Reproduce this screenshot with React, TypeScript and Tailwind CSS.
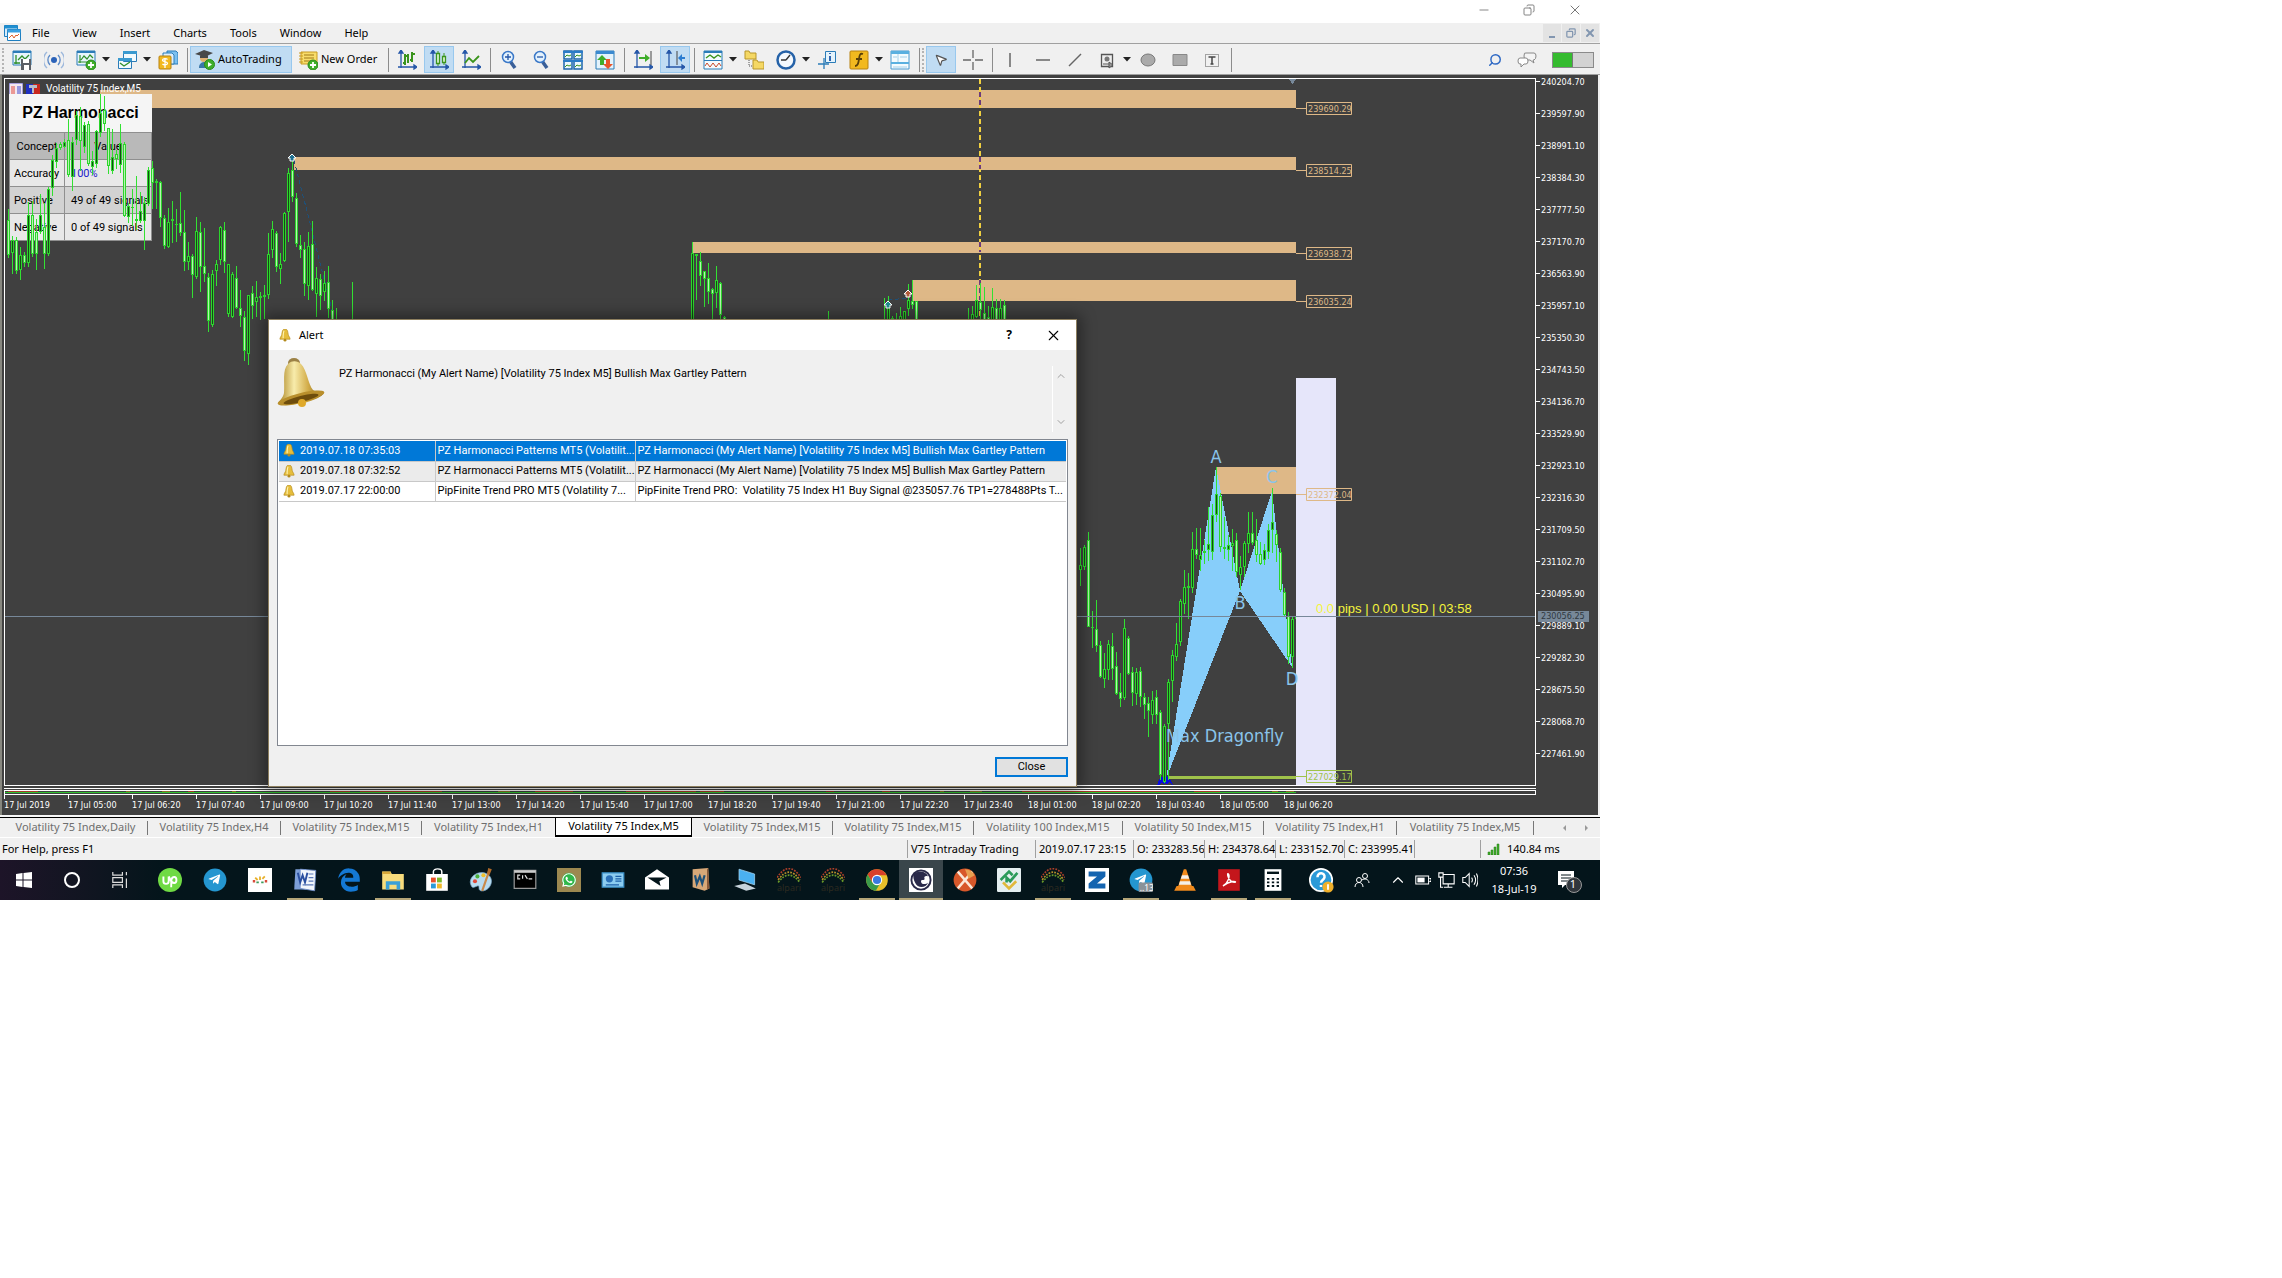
import type { ReactNode } from 'react';
import {
  ChevronUp,
  ChevronDown,
  Minus,
  X,
  Copy,
  Search,
  MousePointer2,
} from 'lucide-react';
import { FaTelegramPlane, FaWhatsapp, FaEdgeLegacy } from 'react-icons/fa';

const MENU = ['File', 'View', 'Insert', 'Charts', 'Tools', 'Window', 'Help'];

const PRICES = [
  '240204.70', '239597.90', '238991.10', '238384.30', '237777.50', '237170.70',
  '236563.90', '235957.10', '235350.30', '234743.50', '234136.70', '233529.90',
  '232923.10', '232316.30', '231709.50', '231102.70', '230495.90', '229889.10',
  '229282.30', '228675.50', '228068.70', '227461.90',
];

const TIMES = [
  '17 Jul 2019', '17 Jul 05:00', '17 Jul 06:20', '17 Jul 07:40', '17 Jul 09:00',
  '17 Jul 10:20', '17 Jul 11:40', '17 Jul 13:00', '17 Jul 14:20', '17 Jul 15:40',
  '17 Jul 17:00', '17 Jul 18:20', '17 Jul 19:40', '17 Jul 21:00', '17 Jul 22:20',
  '17 Jul 23:40', '18 Jul 01:00', '18 Jul 02:20', '18 Jul 03:40', '18 Jul 05:00',
  '18 Jul 06:20',
];

// x, high, body top, body bottom, low, bullish
type Candle = [number, number, number, number, number, number];

const CANDLES: Candle[] = [
  [8, 209, 220, 255, 258, 0], [12, 236, 240, 253, 274, 1], [16, 237, 240, 271, 274, 0],
  [20, 247, 255, 270, 280, 1], [24, 252, 255, 263, 267, 0], [28, 202, 215, 263, 267, 1],
  [32, 201, 215, 254, 257, 0], [36, 219, 232, 254, 270, 0], [40, 194, 215, 232, 234, 1],
  [44, 203, 227, 254, 269, 0], [48, 187, 189, 254, 256, 1], [52, 155, 160, 188, 196, 1],
  [56, 143, 148, 162, 168, 1], [60, 142, 144, 148, 150, 0], [64, 139, 142, 147, 148, 1],
  [68, 119, 140, 175, 177, 0], [72, 137, 142, 177, 191, 1], [76, 111, 115, 140, 145, 1],
  [80, 107, 116, 141, 171, 0], [84, 122, 125, 147, 153, 1], [88, 121, 124, 164, 166, 0],
  [92, 151, 161, 167, 175, 1], [96, 130, 131, 164, 168, 1], [100, 94, 113, 133, 137, 1],
  [104, 96, 110, 124, 131, 0], [108, 128, 128, 166, 174, 0], [112, 129, 157, 171, 174, 1],
  [116, 150, 154, 159, 169, 0], [120, 124, 143, 165, 173, 1], [124, 142, 144, 216, 217, 0],
  [128, 203, 206, 217, 223, 1], [132, 189, 207, 208, 226, 0], [136, 176, 219, 221, 230, 0],
  [140, 192, 211, 221, 223, 1], [144, 197, 203, 221, 250, 1], [148, 167, 170, 204, 206, 1],
  [152, 161, 168, 183, 209, 0], [156, 179, 181, 183, 209, 0], [160, 181, 182, 218, 227, 0],
  [164, 215, 218, 246, 249, 0], [168, 208, 222, 247, 248, 1], [172, 201, 219, 221, 243, 1],
  [176, 209, 224, 225, 242, 0], [180, 192, 223, 233, 236, 0], [184, 210, 232, 262, 271, 0],
  [188, 242, 256, 262, 270, 1], [192, 254, 256, 275, 298, 0], [196, 217, 231, 277, 279, 1],
  [200, 222, 232, 267, 292, 0], [204, 228, 266, 274, 282, 0], [208, 273, 277, 321, 332, 0],
  [212, 270, 274, 325, 327, 1], [216, 260, 264, 271, 286, 1], [220, 226, 227, 260, 265, 1],
  [224, 222, 230, 262, 273, 0], [228, 264, 264, 314, 317, 1], [232, 272, 274, 317, 318, 1],
  [236, 266, 278, 308, 309, 0], [240, 290, 308, 316, 327, 0], [244, 311, 317, 351, 361, 0],
  [248, 295, 295, 354, 365, 1], [252, 286, 293, 306, 319, 0], [256, 281, 297, 302, 317, 1],
  [260, 292, 296, 298, 320, 1], [264, 285, 295, 297, 319, 0], [268, 233, 254, 295, 299, 1],
  [272, 221, 229, 250, 258, 1], [276, 231, 233, 267, 272, 0], [280, 253, 264, 269, 284, 1],
  [284, 212, 213, 261, 262, 1], [288, 168, 173, 212, 242, 1], [292, 158, 170, 197, 202, 0],
  [296, 193, 198, 244, 247, 0], [300, 235, 245, 250, 258, 0], [304, 242, 249, 284, 296, 0],
  [308, 232, 246, 286, 300, 1], [312, 221, 244, 290, 291, 0], [316, 267, 278, 294, 317, 1],
  [320, 274, 279, 296, 310, 0], [324, 271, 283, 292, 301, 1], [328, 266, 282, 309, 318, 0],
  [332, 300, 310, 330, 335, 0], [336, 308, 325, 330, 335, 0], [352, 282, 330, 333, 335, 1],
  [692, 242, 253, 335, 336, 1], [696, 254, 254, 256, 300, 0], [700, 252, 261, 276, 286, 0],
  [704, 271, 271, 279, 307, 0], [708, 263, 278, 292, 304, 0], [712, 288, 289, 294, 330, 0],
  [716, 266, 280, 293, 308, 1], [720, 282, 283, 315, 319, 0], [724, 316, 317, 330, 335, 0],
  [828, 311, 330, 333, 335, 1], [884, 298, 328, 333, 335, 1], [888, 296, 302, 333, 335, 1],
  [892, 316, 318, 333, 335, 0], [896, 313, 322, 333, 335, 1], [900, 307, 316, 333, 335, 1],
  [904, 311, 311, 333, 335, 1], [908, 284, 300, 309, 316, 1], [912, 280, 301, 305, 309, 0],
  [916, 301, 301, 333, 335, 0], [968, 308, 325, 333, 335, 1], [972, 306, 314, 333, 335, 1],
  [976, 285, 300, 317, 318, 1], [980, 283, 302, 310, 330, 0], [984, 287, 313, 333, 335, 0],
  [988, 306, 317, 333, 335, 0], [992, 288, 307, 333, 335, 1], [996, 299, 308, 333, 335, 0],
  [1000, 299, 308, 333, 335, 1], [1004, 300, 305, 333, 335, 0],
  [1080, 548, 565, 570, 586, 1], [1084, 545, 547, 567, 570, 1], [1088, 532, 540, 627, 627, 0],
  [1092, 611, 627, 628, 648, 0], [1096, 600, 629, 646, 652, 0], [1100, 641, 645, 677, 678, 0],
  [1104, 653, 669, 679, 688, 1], [1108, 640, 644, 670, 680, 1], [1112, 633, 646, 669, 680, 0],
  [1116, 652, 666, 694, 695, 0], [1120, 673, 692, 699, 707, 0], [1124, 619, 628, 698, 700, 1],
  [1128, 636, 638, 674, 675, 0], [1132, 667, 672, 693, 706, 0], [1136, 668, 672, 694, 705, 1],
  [1140, 667, 671, 697, 707, 0], [1144, 693, 697, 705, 719, 0], [1148, 697, 703, 711, 737, 0],
  [1152, 691, 700, 715, 724, 1], [1156, 690, 697, 715, 724, 0], [1160, 710, 712, 775, 780, 0],
  [1164, 724, 726, 782, 783, 1], [1168, 679, 682, 724, 780, 1], [1172, 650, 655, 681, 702, 1],
  [1176, 623, 644, 657, 661, 1], [1180, 599, 601, 642, 646, 1], [1184, 570, 587, 604, 614, 1],
  [1188, 573, 586, 588, 619, 0], [1192, 532, 549, 588, 593, 1], [1196, 528, 549, 555, 559, 0],
  [1200, 528, 555, 560, 571, 1], [1204, 540, 551, 553, 564, 1], [1208, 507, 544, 550, 561, 1],
  [1212, 504, 515, 552, 560, 1], [1216, 467, 494, 515, 522, 1], [1220, 493, 496, 547, 552, 0],
  [1224, 517, 547, 549, 559, 0], [1228, 535, 545, 550, 561, 1], [1232, 529, 543, 546, 571, 1],
  [1236, 533, 540, 572, 577, 0], [1240, 556, 567, 575, 590, 1], [1244, 541, 543, 567, 577, 1],
  [1248, 512, 533, 544, 553, 1], [1252, 512, 533, 543, 545, 0], [1256, 519, 540, 555, 562, 0],
  [1260, 542, 554, 564, 565, 0], [1264, 544, 550, 560, 565, 1], [1268, 524, 530, 552, 559, 1],
  [1272, 488, 522, 530, 553, 1], [1276, 530, 534, 545, 562, 0], [1280, 548, 552, 590, 592, 0],
  [1284, 588, 592, 615, 616, 0], [1288, 612, 616, 657, 664, 0], [1292, 616, 619, 657, 668, 1],
  [1296, 608, 617, 619, 623, 1],
];

const ZONES = [
  { x: 100, y: 90, h: 18, label: '239690.29' },
  { x: 294, y: 157, h: 13, label: '238514.25' },
  { x: 693, y: 242, h: 11, label: '236938.72' },
  { x: 913, y: 280, h: 21, label: '236035.24' },
  { x: 1216, y: 467, h: 27, label: '232372.04' },
];

// x, width, colour of the indicator strip below the chart
const STRIP: [number, number, string][] = [
  [8, 30, '#a33a2a'], [126, 4, '#8a6a2a'], [162, 8, '#8a6a2a'], [188, 6, '#a33a2a'],
  [232, 4, '#8a6a2a'], [330, 20, '#a33a2a'], [360, 82, '#a33a2a'], [498, 12, '#8a6a2a'],
  [535, 38, '#a33a2a'], [626, 70, '#a33a2a'], [700, 24, '#a33a2a'], [826, 8, '#8a2a2a'],
  [882, 8, '#a33a2a'], [940, 4, '#8a6a2a'], [970, 12, '#8a6a2a'], [1022, 148, '#a33a2a'],
  [1194, 26, '#a33a2a'], [1272, 6, '#8a6a2a'], [1286, 8, '#8a6a2a'],
];

const TABS = [
  { name: 'Volatility 75 Index,Daily', w: 'w-36' },
  { name: 'Volatility 75 Index,H4', w: 'w-[133px]' },
  { name: 'Volatility 75 Index,M15', w: 'w-[141px]' },
  { name: 'Volatility 75 Index,H1', w: 'w-[133px]' },
  { name: 'Volatility 75 Index,M5', w: 'w-[137px]', active: true },
  { name: 'Volatility 75 Index,M15', w: 'w-[141px]' },
  { name: 'Volatility 75 Index,M15', w: 'w-[141px]' },
  { name: 'Volatility 100 Index,M15', w: 'w-[149px]' },
  { name: 'Volatility 50 Index,M15', w: 'w-[141px]' },
  { name: 'Volatility 75 Index,H1', w: 'w-[133px]' },
  { name: 'Volatility 75 Index,M5', w: 'w-[137px]' },
];

const STATUS = [
  { text: 'V75 Intraday Trading', w: 'w-32' },
  { text: '2019.07.17 23:15', w: 'w-[98px]' },
  { text: 'O: 233283.56', w: 'w-[71px]' },
  { text: 'H: 234378.64', w: 'w-[71px]' },
  { text: 'L: 233152.70', w: 'w-[69px]' },
  { text: 'C: 233995.41', w: 'w-[70px]' },
  { text: '', w: 'w-[66px]' },
];

const ALERTS = [
  {
    time: '2019.07.18 07:35:03',
    source: 'PZ Harmonacci Patterns MT5 (Volatilit...',
    message: 'PZ Harmonacci (My Alert Name) [Volatility 75 Index M5] Bullish Max Gartley Pattern',
    row: 'bg-[#0078d7] text-white',
  },
  {
    time: '2019.07.18 07:32:52',
    source: 'PZ Harmonacci Patterns MT5 (Volatilit...',
    message: 'PZ Harmonacci (My Alert Name) [Volatility 75 Index M5] Bullish Max Gartley Pattern',
    row: 'bg-[#ebebeb] text-black',
  },
  {
    time: '2019.07.17 22:00:00',
    source: 'PipFinite Trend PRO MT5 (Volatility 7...',
    message: 'PipFinite Trend PRO:  Volatility 75 Index H1 Buy Signal @235057.76 TP1=278488Pts T...',
    row: 'bg-white text-black',
  },
];

function Icon({ children, className = 'h-5 w-5' }: { children: ReactNode; className?: string }) {
  return (
    <svg viewBox="0 0 20 20" className={className} fill="none">
      {children}
    </svg>
  );
}

function Tool({
  label,
  active,
  children,
}: {
  label: string;
  active?: boolean;
  children: ReactNode;
}) {
  return (
    <button
      aria-label={label}
      className={`flex h-[27px] shrink-0 items-center justify-center ${
        active ? 'mx-px w-[30px] border border-[#98c8ee] bg-[#c0dcf3]' : 'w-8'
      }`}
    >
      {children}
    </button>
  );
}

function Caret() {
  return (
    <svg viewBox="0 0 9 5" className="h-[5px] w-[9px] shrink-0">
      <path d="M0 0h8L4 4.500z" fill="#222" />
    </svg>
  );
}

const Sep = () => <span className="mr-0.5 ml-[3px] h-6 w-px shrink-0 bg-[#8c8c8c]" />;
const Grip = () => (
  <span className="mr-px h-6 w-0 shrink-0 border-l-2 border-dotted border-[#b4b4b4]" />
);

const axes = (
  <path
    d="M4 1v17M1 17h17M4 0l-2 3h4zM20 17l-3-2v4z"
    stroke="#2456a8"
    strokeWidth="1.300"
    fill="#2456a8"
  />
);

const plus = (
  <g>
    <circle cx="15" cy="15" r="5" fill="#3fae2a" stroke="#2a8a1a" />
    <path d="M15 12v6M12 15h6" stroke="#fff" strokeWidth="1.800" />
  </g>
);

function Bell({ className }: { className: string }) {
  return (
    <svg viewBox="0 0 48 50" className={className}>
      <defs>
        <linearGradient id="gold" x1="0" x2="1">
          <stop offset="0" stopColor="#a8801c" />
          <stop offset="0.35" stopColor="#f8ecab" />
          <stop offset="0.65" stopColor="#d3ad4a" />
          <stop offset="1" stopColor="#7d5c10" />
        </linearGradient>
      </defs>
      <ellipse cx="17" cy="5" rx="6" ry="5" fill="#9c8246" />
      <path
        d="M11 6c4-4 10-3 13 0 6 6 7 20 12 26 4 3 8 2 11 2-2 9-36 16-46 12 0-3 5-5 6-11C8 24 5 12 11 6z"
        fill="url(#gold)"
      />
      <ellipse cx="24" cy="40" rx="24" ry="5" transform="rotate(-14 24 40)" fill="#b98f2c" />
      <ellipse cx="24" cy="41" rx="18" ry="3" transform="rotate(-14 24 41)" fill="#6e4d0c" />
      <circle cx="25" cy="45" r="4" fill="#dfa92a" />
    </svg>
  );
}

function SmallBell() {
  return (
    <svg viewBox="0 0 12 14" className="h-[13px] w-3 shrink-0">
      <path d="M6 0c3 0 3 3 3.500 6 .4 2 2 3 2 5H.5c0-2 1.600-3 2-5C3 3 3 0 6 0z" fill="#e5bd3c" stroke="#b38a1c" strokeWidth=".7" />
      <path d="M5 2c-1 2-1 5-1 8" stroke="#fff3b0" strokeWidth="1.200" fill="none" />
      <circle cx="6" cy="12" r="1.500" fill="#b38a1c" />
    </svg>
  );
}

function TitleBar() {
  return (
    <div className="flex h-[23px] items-center justify-end gap-8 bg-white pr-[17px] pb-1 text-[#777]">
      <button aria-label="Minimize"><Minus className="h-3.5 w-3.5" strokeWidth={1.500} /></button>
      <button aria-label="Restore"><Copy className="h-3 w-3 -scale-x-100" strokeWidth={1.800} /></button>
      <button aria-label="Close"><X className="h-4 w-4" strokeWidth={1.500} /></button>
    </div>
  );
}

function MenuBar() {
  return (
    <nav className="flex h-5 items-center bg-[#f0f0f0] pl-1 text-[11px] text-black">
      <svg viewBox="0 0 18 18" className="h-[18px] w-[18px]">
        <path d="M.5 1.500h13v11H.5z" fill="#d8ecfa" stroke="#1f7fc0" />
        <path d="M.5 1.500h13v3H.5z" fill="#1f8fd0" />
        <path d="M3.500 5.500h13v11h-13z" fill="#fff" stroke="#1f7fc0" />
        <path d="M3.500 5.500h13v3h-13z" fill="#3aa0e0" />
        <path d="M5 14l3-3 2 3 2-3 1 1 2-2" stroke="#e0602a" fill="none" />
      </svg>
      <div className="flex gap-[23px] pl-2.5">
        {MENU.map((m) => (
          <button key={m}>{m}</button>
        ))}
      </div>
      <div className="ml-auto flex gap-px pr-px text-[#8296b0]">
        <button aria-label="Minimize chart" className="flex h-[18px] w-[18px] items-end justify-center bg-[#e3e3e3] pb-1">
          <span className="h-0.5 w-1.5 bg-[#8296b0]" />
        </button>
        <button aria-label="Restore chart" className="flex h-[18px] w-[18px] items-center justify-center bg-[#e3e3e3]">
          <Copy className="h-2.5 w-2.5 -scale-x-100" strokeWidth={3} />
        </button>
        <button aria-label="Close chart" className="flex h-[18px] w-[18px] items-center justify-center bg-[#e3e3e3]">
          <X className="h-3 w-3" strokeWidth={4} />
        </button>
      </div>
    </nav>
  );
}

function Toolbar() {
  return (
    <div className="flex h-8 items-center border-y border-[#a0a0a0] bg-[#f0f0f0] pt-px pl-0.5 text-[11px] text-black">
      <Grip />
      <span className="w-px" />
      <Tool label="Save chart">
        <Icon>
          <path d="M1 1h18v14H1z" fill="#e8f5fc" stroke="#2b7cb8" />
          <path d="M1 1h18v2H1z" fill="#2b7cb8" />
          <path d="M4 5v9M2 13h6M6 10l4-4 3 3 4-4" stroke="#2f8f2a" strokeWidth="1.300" />
          <path d="M9 9h10v11H9z" fill="#5a5f66" />
          <path d="M11 9h6v4h-6zM12 15h5v5h-5z" fill="#fff" />
        </Icon>
      </Tool>
      <Tool label="Signals">
        <Icon>
          <circle cx="10" cy="10" r="3" fill="#2b62b8" />
          <path d="M6 5a7 7 0 000 10M14 5a7 7 0 010 10" stroke="#5f8cc8" strokeWidth="1.400" />
          <path d="M3 2a11 11 0 000 16M17 2a11 11 0 010 16" stroke="#9db8dc" strokeWidth="1.400" />
        </Icon>
      </Tool>
      <Tool label="New chart">
        <Icon>
          <path d="M1 1h18v14H1z" fill="#e8f5fc" stroke="#2b7cb8" />
          <path d="M1 1h18v2H1z" fill="#2b7cb8" />
          <path d="M4 5v8M2 12h15M5 10l3-4 3 3 3-4 3 3" stroke="#2f8f2a" strokeWidth="1.200" />
          {plus}
        </Icon>
      </Tool>
      <Caret />
      <Tool label="Windows">
        <Icon>
          <path d="M6.500 1.500h13v10h-13zM1.500 8.500h13v10h-13z" fill="#f2fafd" stroke="#2b7cb8" />
          <path d="M6 1h14v3H6zM1 8h14v3H1z" fill="#3a9ad0" />
          <path d="M3 13l4 3 3-2 3-2" stroke="#2f8f2a" strokeWidth="1.300" />
        </Icon>
      </Tool>
      <Caret />
      <Tool label="Market">
        <Icon>
          <path d="M9 1h9l2 2v11H9z" fill="#7cc0f0" stroke="#2b7cb8" />
          <path d="M5 3h9l2 2v9H5z" fill="#dceefc" stroke="#2b7cb8" />
          <rect x="1" y="6" width="12" height="13" rx="1" fill="#f2b91f" stroke="#b88210" />
          <path d="M9.500 9.500c-1-1.500-5-1-5 .8s5 1 5 3-4 2.200-5 .6M7 8v10" stroke="#fff" strokeWidth="1.300" />
        </Icon>
      </Tool>
      <Sep />
      <button className="flex h-[27px] w-[102px] items-center gap-[3px] border border-[#98c8ee] bg-[#c0dcf3] pl-1 whitespace-nowrap">
        <Icon>
          <path d="M4 18c0-5 3-6 6-6s6 1 6 6z" fill="#3a78a8" />
          <circle cx="9" cy="8" r="4" fill="#e0b070" />
          <path d="M0 4l9-4 9 3-8 4zM5 5h8v3H5z" fill="#484848" />
          <circle cx="14.500" cy="14.500" r="5" fill="#3fae2a" stroke="#2a8a1a" />
          <path d="M13 12l4 2.500-4 2.500z" fill="#fff" />
        </Icon>
        AutoTrading
      </button>
      <button className="flex h-[27px] w-[93px] items-center gap-[3px] pl-1.5 whitespace-nowrap">
        <Icon>
          <path d="M3 2h16v12H3z" fill="#f8dc6a" stroke="#c89a20" />
          <path d="M6 5h10M6 8h10M6 11h7" stroke="#a07818" />
          <path d="M1 3h4M1 6h4M1 9h4M1 12h4" stroke="#c89a20" />
          {plus}
        </Icon>
        New Order
      </button>
      <Sep />
      <Tool label="Bar chart">
        <Icon>
          {axes}
          <path d="M8 4v11M6 13h2M8 6h3M11 4v9M15 2v10M13 10h2M15 4h3" stroke="#3a941c" strokeWidth="2" />
        </Icon>
      </Tool>
      <Tool label="Candlesticks" active>
        <Icon>
          {axes}
          <path d="M9 1v15M15 3v12" stroke="#3a941c" />
          <path d="M7.500 3.500h3v10h-3zM13.500 6.500h3v6h-3z" fill="#dff5d4" stroke="#3a941c" strokeWidth="1.300" />
        </Icon>
      </Tool>
      <Tool label="Line chart">
        <Icon>
          {axes}
          <path d="M4 13l4-5 4 4 6-6" stroke="#3a941c" strokeWidth="1.800" />
        </Icon>
      </Tool>
      <Sep />
      <Tool label="Zoom in">
        <Icon>
          <path d="M11 11l5 7" stroke="#3a5f98" strokeWidth="3.500" />
          <circle cx="9" cy="7" r="5.500" fill="#e4f2fd" stroke="#3a78c8" strokeWidth="1.500" />
          <path d="M9 4v6M6 7h6" stroke="#2456a8" strokeWidth="1.300" />
        </Icon>
      </Tool>
      <Tool label="Zoom out">
        <Icon>
          <path d="M11 11l5 7" stroke="#3a5f98" strokeWidth="3.500" />
          <circle cx="9" cy="7" r="5.500" fill="#e4f2fd" stroke="#3a78c8" strokeWidth="1.500" />
          <path d="M6 7h6" stroke="#2456a8" strokeWidth="1.300" />
        </Icon>
      </Tool>
      <Tool label="Tile windows">
        <Icon>
          <path d="M1 1h8v8H1zM11 1h8v8h-8zM1 11h8v8H1zM11 11h8v8h-8z" fill="#eaf6fd" stroke="#1c66ac" strokeWidth="1.500" />
          <path d="M0 1h20v2H0zM0 10h20v2H0z" fill="#2b7cc8" />
          <path d="M2 7l2-2 2 1 2-1M12 7l2-2 2 1 2-1M2 17l2-2 2 1 2-1M12 17l2-2 2 1 2-1" stroke="#3a941c" />
        </Icon>
      </Tool>
      <Tool label="Trade levels">
        <Icon>
          <path d="M1 1h18v18H1z" fill="#e4f3fc" stroke="#2b7cb8" />
          <path d="M1 1h18v3H1z" fill="#3a8ad0" />
          <path d="M7 5l5 5H9v5H5v-5H2z" fill="#3fae2a" />
          <path d="M13 19l5-5h-3V9h-4v5H8z" fill="#e8552a" />
        </Icon>
      </Tool>
      <Sep />
      <Tool label="Auto scroll">
        <Icon>
          {axes}
          <path d="M18 1v14" stroke="#444" />
          <path d="M6 7h6V4l5 4-5 4V9H6z" fill="#3fae2a" />
        </Icon>
      </Tool>
      <Tool label="Chart shift" active>
        <Icon>
          {axes}
          <path d="M12 1v14" stroke="#444" />
          <path d="M20 7h-3V4l-4 4 4 4V9h3z" fill="#2b7cd0" />
        </Icon>
      </Tool>
      <Sep />
      <Tool label="Indicators">
        <Icon>
          <path d="M1 1h18v18H1z" fill="#f4fbfe" stroke="#2b7cb8" />
          <path d="M1 1h18v2H1zM1 10h18v1H1z" fill="#2b7cb8" />
          <path d="M3 8l4-3 4 3 4-3 3 2" stroke="#3a941c" strokeWidth="1.400" />
          <path d="M2 16l2-3 3 4 3-4 3 4 3-4 2 3" stroke="#c84a2a" />
        </Icon>
      </Tool>
      <Caret />
      <Tool label="Objects">
        <Icon>
          <path d="M1 1h4l1 2h6v6H1zM9 10h4l1 2h6v7H9z" fill="#f5d864" stroke="#b8962a" />
          <path d="M5 10v6h4" stroke="#555" strokeDasharray="1 1" />
        </Icon>
      </Tool>
      <Tool label="Timeframes">
        <Icon>
          <circle cx="10" cy="10" r="8.500" fill="#f4f9fe" stroke="#2562a8" strokeWidth="2.500" />
          <path d="M10 10l4-5M10 10H5" stroke="#333" strokeWidth="1.400" />
        </Icon>
      </Tool>
      <Caret />
      <Tool label="Data window">
        <Icon>
          <path d="M8.500 1.500h10v11h-10z" fill="#e4f3fc" stroke="#2b7cb8" />
          <path d="M13 3v1M13 6v5" stroke="#1c56a8" strokeWidth="1.800" />
          <path d="M7 8v11M1 14h11" stroke="#2b7cb8" strokeWidth="1.300" />
        </Icon>
      </Tool>
      <Tool label="Functions">
        <Icon>
          <rect x="1" y="1" width="18" height="18" rx="1" fill="#f2b91f" stroke="#b88210" />
          <path d="M14 4c-3-1-3.500 1-4 5s-1 7-4 7M7 9h6" stroke="#5a4008" strokeWidth="1.800" />
        </Icon>
      </Tool>
      <Caret />
      <Tool label="Templates">
        <Icon>
          <path d="M1 1h18v18H1z" fill="#f4fbfe" stroke="#4a9ad0" />
          <path d="M1 1h18v3H1zM1 12h18v2H1z" fill="#5ab0e0" />
          <path d="M8 4v8M10 7h7M3 7h4M3 17h14" stroke="#a4d0ea" />
        </Icon>
      </Tool>
      <Sep />
      <Grip />
      <Tool label="Cursor" active>
        <MousePointer2 className="h-3.5 w-3.5 fill-white text-[#555]" />
      </Tool>
      <Tool label="Crosshair">
        <Icon>
          <path d="M10 0v8M10 12v8M0 10h8M12 10h8" stroke="#666" strokeWidth="1.300" />
        </Icon>
      </Tool>
      <Sep />
      <Tool label="Vertical line">
        <Icon><path d="M9 3v14" stroke="#666" strokeWidth="1.500" /></Icon>
      </Tool>
      <Tool label="Horizontal line">
        <Icon><path d="M3 10h14" stroke="#666" strokeWidth="1.500" /></Icon>
      </Tool>
      <Tool label="Trend line">
        <Icon><path d="M4 16L16 4" stroke="#666" strokeWidth="1.500" /></Icon>
      </Tool>
      <Tool label="Shapes">
        <Icon>
          <path d="M4.500 4.500h11v12h-11z" fill="#eee" stroke="#555" strokeWidth="1.300" />
          <circle cx="10" cy="9" r="2.500" fill="#777" />
          <path d="M6 14h6M12 12l4 3-4 3z" stroke="#555" fill="#999" />
        </Icon>
      </Tool>
      <Caret />
      <Tool label="Ellipse">
        <Icon><ellipse cx="10" cy="10" rx="7" ry="6" fill="#aaa" stroke="#777" /></Icon>
      </Tool>
      <Tool label="Rectangle">
        <Icon><path d="M3 4.500h14v11H3z" fill="#aaa" stroke="#888" /></Icon>
      </Tool>
      <Tool label="Text">
        <Icon>
          <path d="M3.500 4.500h13v12h-13z" stroke="#555" strokeDasharray="1 1" />
          <path d="M6.500 7h7M10 7v7M8.500 14h3" stroke="#444" strokeWidth="1.500" />
        </Icon>
      </Tool>
      <Sep />
      <div className="ml-auto flex items-center gap-3.5 pr-1.5">
        <button aria-label="Search"><Search className="h-3.5 w-3.5 -scale-x-100 text-[#2d68c4]" strokeWidth={2.500} /></button>
        <button aria-label="Chat">
          <Icon className="h-5 w-[22px]">
            <path d="M9 3h8q2 0 2 3t-2 4h-1l1 3-4-3H9q-2 0-2-4t2-3z" fill="#f4f4f4" stroke="#888" />
            <path d="M3 8h6q2 0 2 3t-2 3H7l-3 3v-3H3q-2 0-2-3t2-3z" fill="#fff" stroke="#888" />
          </Icon>
        </button>
        <span className="flex h-4 w-[42px] border border-[#8a8a8a] bg-[#d2d2d2]">
          <span className="w-1/2 border-r border-[#777] bg-[#35bb2f]" />
        </span>
      </div>
    </div>
  );
}

function SignalPanel() {
  const cell = 'border border-[#8f8f8f] pt-0.5 pl-1';
  const value = 'border border-[#8f8f8f] pt-0.5 pl-1.5';
  return (
    <table className="absolute top-[15px] left-1 w-[143px] border-collapse font-['Roboto',sans-serif] text-[11px] leading-3 whitespace-nowrap text-black">
      <caption className="h-[38px] bg-[#f5f5f5] font-['Liberation_Sans',sans-serif] text-base leading-[38px] font-bold">
        PZ Harmonacci
      </caption>
      <tbody>
        <tr className="h-[27px] bg-[#b9b9b9] text-center">
          <th className="w-[55px] border border-[#8f8f8f] pt-0.5 font-normal">Concept</th>
          <th className="border border-[#8f8f8f] pt-0.5 font-normal">Value</th>
        </tr>
        <tr className="h-[27px] bg-[#e8e8e8]">
          <td className={cell}>Accuracy</td>
          <td className={`${value} text-[#1a1ac8]`}>100%</td>
        </tr>
        <tr className="h-[27px] bg-[#d2d2d2]">
          <td className={cell}>Positive</td>
          <td className={value}>49 of 49 signals</td>
        </tr>
        <tr className="h-[27px] bg-[#e8e8e8]">
          <td className={cell}>Negative</td>
          <td className={value}>0 of 49 signals</td>
        </tr>
      </tbody>
    </table>
  );
}

function PriceTag({ y, label, color }: { y: number; label: string; color: string }) {
  return (
    <g>
      <path d={`M1296 ${y}.500h10M1306.500 ${y - 6}.500h45v12h-45z`} stroke={color} fill="none" />
      <text x="1308" y={y + 4} fill={color} className="text-[9px]">{label}</text>
    </g>
  );
}

function Marker({ x, y, color }: { x: number; y: number; color: string }) {
  return <path d={`M${x} ${y - 4}l4 4-2 0 0 3-4 0 0-3-2 0z`} fill={color} stroke="#fff" />;
}

function Plot() {
  return (
    <div className="relative h-[708px] w-full shrink-0 overflow-hidden border border-white">
      <svg viewBox="5 79 1530 706" className="absolute top-0 left-0 h-[706px] w-[1530px]" shapeRendering="crispEdges">
        {ZONES.map((z) => (
          <rect key={z.label} x={z.x} y={z.y} width={1296 - z.x} height={z.h} fill="#deb887" />
        ))}
        <path d="M980 79v240" stroke="#f0d040" strokeWidth="2" strokeDasharray="5 3" />
        <path d="M980 92v16M980 157v12M980 242v10M980 280v20" stroke="#6b3a7a" strokeWidth="2" strokeDasharray="5 3" />
        <path d="M294 160L334 318M888 300L908 298" stroke="#1f5078" strokeDasharray="4 3" />
        <path d="M1166 779L1216 467 1240 591zM1240 591L1272 491 1292 667z" fill="#87cefa" />
        <rect x="1168" y="776" width="128" height="3" fill="#9fc24a" />
      </svg>
      <div className="absolute top-1 left-1 flex items-center gap-[3px] font-['Roboto',sans-serif] text-[10px] leading-3 text-white">
        <svg viewBox="0 0 14 12" className="h-3 w-3.5">
          <path d="M0 0h14v12H0z" fill="#f4e8ee" stroke="#5a5ac8" />
          <path d="M2 4h4M2 6h4M2 8h4M2 10h4" stroke="#e04a3a" />
          <path d="M8 4h4M8 6h4M8 8h4M8 10h4" stroke="#3a4ad0" />
        </svg>
        <svg viewBox="0 0 14 12" className="h-3 w-3.5">
          <path d="M0 1h7v11H0z" fill="#2030c0" />
          <path d="M7 1h7v11H7z" fill="#c8281e" />
          <path d="M3 2h8v3H8v5H6V5H3z" fill="#b8bcc8" />
        </svg>
        <span className="pl-[3px] whitespace-nowrap">Volatility 75 Index,M5</span>
      </div>
      <SignalPanel />
      <svg viewBox="5 79 1530 706" className="absolute top-0 left-0 h-[706px] w-[1530px]">
        <g shapeRendering="crispEdges">
          <path d="M1157 785l3-7 2-2 2 4 2-4 4 3 3 6-4-3-2 3-2-2-1 2-2-3-2 3z" fill="#0a0ae0" />
          {CANDLES.map(([x, hi, top, bottom, lo, bull]) => (
            <g key={x}>
              <rect x={x} y={hi} width={1} height={lo - hi} fill="#32e132" />
              <rect x={x - 1} y={top} width={3} height={Math.max(bottom - top, 1)} fill="#2cd42c" />
              {bottom - top > 2 && (
                <rect x={x} y={top + 1} width={1} height={bottom - top - 2} fill={bull ? '#154a15' : '#b6f5b0'} />
              )}
            </g>
          ))}
          <path d="M1289 79h7l-3.500 5z" fill="#778899" />
          <path d="M5 616.500h1530" stroke="#778899" />
          <rect x="1296" y="378" width="40" height="407" fill="#e6e6fa" />
        </g>
        <Marker x={292} y={158} color="#1f7090" />
        <Marker x={888} y={305} color="#1f9090" />
        <Marker x={908} y={294} color="#b05a3a" />
        {ZONES.map((z) => (
          <PriceTag key={z.label} y={z.y + z.h} label={z.label} color="#deb887" />
        ))}
        <PriceTag y={776} label="227029.17" color="#9fc24a" />
        <path d="M1296 616.500h40" stroke="#778899" />
        <g fill="#8ac4ea" textAnchor="middle" className="text-[18px]">
          <text x="1216" y="463">A</text>
          <text x="1240" y="609">B</text>
          <text x="1272" y="483">C</text>
          <text x="1292" y="685">D</text>
          <text x="1225" y="742">Max Dragonfly</text>
        </g>
        <text x="1316" y="613" fill="#f4f43c" className="font-['Liberation_Sans',sans-serif] text-[13px]">
          0.0 pips | 0.00 USD | 03:58
        </text>
      </svg>
    </div>
  );
}

function AlertDialog() {
  return (
    <div
      role="dialog"
      aria-label="Alert"
      className="absolute top-[244px] left-[266px] flex h-[468px] w-[809px] flex-col border border-[#8d7f5f] bg-[#f0f0f0] font-['Roboto',sans-serif] text-[11px] text-black shadow-[0_0_14px_4px_rgba(0,0,0,0.4)]"
    >
      <div className="flex h-[30px] shrink-0 items-center bg-white pr-3.5 pl-2.5 font-['Noto_Sans',sans-serif]">
        <SmallBell />
        <span className="pl-2">Alert</span>
        <button aria-label="Help" className="ml-auto w-6 text-xs font-bold">?</button>
        <button aria-label="Close alert" className="ml-6"><X className="h-[17px] w-[17px]" strokeWidth={1.500} /></button>
      </div>
      <div className="flex h-[89px] shrink-0 pr-2">
        <Bell className="mt-2 ml-2 h-[50px] w-12" />
        <p className="flex-1 pt-4 pl-3.5 whitespace-nowrap">
          PZ Harmonacci (My Alert Name) [Volatility 75 Index M5] Bullish Max Gartley Pattern
        </p>
        <div className="mt-4 flex h-[66px] w-4 flex-col items-center justify-between border-l border-white py-1 text-[#a0a0a0]">
          <ChevronUp className="h-3 w-3" />
          <ChevronDown className="h-3 w-3" />
        </div>
      </div>
      <div className="mx-2 h-[307px] shrink-0 border border-[#828790] bg-white p-px">
        <table className="w-full table-fixed border-collapse">
          <tbody>
            {ALERTS.map((a) => (
              <tr key={a.time} className={`h-5 border-b border-[#c8c8c8] ${a.row}`}>
                <td className="w-[156px] border-r border-[#c8c8c8]">
                  <div className="flex items-center gap-[5px] pl-1">
                    <SmallBell />
                    {a.time}
                  </div>
                </td>
                <td className="w-[200px] overflow-hidden border-r border-[#c8c8c8] pl-0.5 whitespace-nowrap">{a.source}</td>
                <td className="overflow-hidden pl-0.5 whitespace-pre">{a.message}</td>
              </tr>
            ))}
          </tbody>
        </table>
      </div>
      <div className="flex flex-1 items-center justify-end pt-0.5 pr-2">
        <button className="h-5 w-[73px] border-2 border-[#0078d7] bg-[#e1e1e1] leading-4">Close</button>
      </div>
    </div>
  );
}

function ChartWindow() {
  return (
    <div className="relative border-l-2 border-[#87877f] bg-[#404040] pt-0.5 pr-0.5 pl-0.5 font-['DejaVu_Sans_Condensed','Noto_Sans',sans-serif]">
      <div className="absolute inset-y-0 right-0 w-0.5 bg-[#f0f0f0]" />
      <div className="flex">
        <div className="flex min-w-0 flex-1 flex-col pt-px">
          <Plot />
          <div className="mt-0.5 h-px bg-white" />
          <svg viewBox="4 0 1532 5" className="mt-px h-[5px] w-full" preserveAspectRatio="none" shapeRendering="crispEdges">
            <path d="M4 0h1532v5H4z" fill="#fff" />
            <path d="M5 1h1530v3H5z" fill="#404040" />
            <path d="M5 2h1291v1H5z" fill="#2fc02f" />
            {STRIP.map(([x, w, fill]) => (
              <rect key={x} x={x} y={1} width={w} height={1} fill={fill} />
            ))}
          </svg>
        </div>
        <div className="relative w-[62px] shrink-0 text-[9px] text-white">
          <ul>
            {PRICES.map((p) => (
              <li key={p} className="flex h-8 items-start leading-[10px]">
                <span className="mt-1 mr-px h-px w-1 bg-white" />
                {p}
              </li>
            ))}
          </ul>
          <span className="absolute top-[534px] left-0.5 bg-[#778899] pr-1 pl-[3px] leading-[11px] text-[#303840]">230056.25</span>
        </div>
      </div>
      <ul className="flex h-5 overflow-hidden text-[9px] whitespace-nowrap text-white">
        {TIMES.map((t) => (
          <li key={t} className="flex w-16 shrink-0 flex-col items-start leading-3">
            <span className="h-1 w-px bg-white" />
            {t}
          </li>
        ))}
      </ul>
      <AlertDialog />
    </div>
  );
}

function ChartTabs() {
  return (
    <div className="border-t-2 border-[#f8f8f8]">
      <div className="flex h-5 border-t border-black bg-[#f0f0f0] pl-1 text-[11px] text-[#6e6e6e]">
        {TABS.map((t, i) => (
          <button
            key={i}
            className={`flex shrink-0 items-center justify-center whitespace-nowrap ${t.w} ${
              t.active ? 'border-x border-b-2 border-black bg-white text-black' : ''
            }`}
          >
            <span className="flex-1">{t.name}</span>
            {!t.active && i !== 3 && <span className="h-3.5 w-px bg-[#777]" />}
          </button>
        ))}
        <div className="ml-auto flex items-center gap-[19px] pr-3">
          <button aria-label="Scroll left">
            <svg viewBox="0 0 3 6" className="h-1.5 w-[3px]"><path d="M3 0v6L0 3z" fill="#999" /></svg>
          </button>
          <button aria-label="Scroll right">
            <svg viewBox="0 0 3 6" className="h-1.5 w-[3px]"><path d="M0 0v6l3-3z" fill="#999" /></svg>
          </button>
        </div>
      </div>
    </div>
  );
}

function StatusBar() {
  return (
    <div className="flex h-[23px] items-center border-t border-white bg-[#f0f0f0] pl-0.5 text-[11px] whitespace-nowrap text-black">
      <span>For Help, press F1</span>
      <div className="ml-auto flex">
        {STATUS.map((s) => (
          <span key={s.text} className={`h-[18px] border-l border-[#a0a0a0] pl-[3px] leading-[18px] ${s.w}`}>
            {s.text}
          </span>
        ))}
        <span className="flex h-[18px] w-[120px] items-center gap-1.5 border-l border-[#a0a0a0] pl-1.5">
          <svg viewBox="0 0 14 12" className="h-3 w-3.5">
            <path d="M1 12V9h2v3zM4 12V7h2v5zM7 12V4h2v8zM10 12V1h2v11z" fill="#3fae2a" stroke="#2a7a1a" strokeWidth=".5" />
          </svg>
          140.84 ms
        </span>
      </div>
    </div>
  );
}

const alpari = (
  <g strokeDasharray="1.500 1">
    <path d="M0 8Q10-7 20 8" stroke="#b0402a" strokeWidth="1.400" />
    <path d="M1 10Q10-3 19 10" stroke="#b8902a" strokeWidth="1.400" />
    <path d="M1 12Q10 0 19 12" stroke="#6a9a2a" strokeWidth="1.400" />
  </g>
);

const TASKS: { name: string; open?: boolean; active?: boolean; caption?: string; icon: ReactNode }[] = [
  {
    name: 'Upwork',
    icon: (
      <>
        <circle cx="10" cy="10" r="10" fill="#6fda44" />
        <path d="M4.500 7v4a2.200 2.200 0 004.400 0V7M11 16c0-6 0-8.500 2.500-8.500s2.500 5 0 5S11 11 9 7" stroke="#fff" strokeWidth="1.600" />
      </>
    ),
  },
  {
    name: 'Telegram',
    icon: (
      <>
        <circle cx="10" cy="10" r="9.500" fill="#2496d0" />
        <FaTelegramPlane x={4} y={4} size={11} color="#fff" />
      </>
    ),
  },
  {
    name: 'Photos',
    icon: (
      <>
        <path d="M0 0h20v20H0z" fill="#fff" />
        <path d="M4 11h2M14 11h2" stroke="#d84a3a" strokeWidth="2" />
        <path d="M6 8l2 2M12 9l2-2M10 7v3" stroke="#e8b02a" strokeWidth="1.500" />
        <path d="M7 12h2M11 12h2" stroke="#3a9a5a" strokeWidth="1.500" />
      </>
    ),
  },
  {
    name: 'Word',
    open: true,
    icon: (
      <>
        <path d="M2 1h9v17H1z" fill="#7d9fd8" />
        <path d="M6 1l13 1-1 17-12-2z" fill="#f2f6fc" stroke="#6c8cc8" strokeWidth=".7" />
        <path d="M4 4l2 8 2-6 2 6 2-8" stroke="#2a4fa0" strokeWidth="1.600" />
        <path d="M13 5h4M13 8h4M13 11h4M8 14h9" stroke="#5a78b8" />
      </>
    ),
  },
  { name: 'Edge', icon: <FaEdgeLegacy x={0} y={0} size={20} color="#1478d4" /> },
  {
    name: 'File Explorer',
    open: true,
    icon: (
      <>
        <path d="M1 3h7l1 2h10v13H1z" fill="#f8dc7c" />
        <path d="M1 3h7v2H1z" fill="#d8a83a" />
        <path d="M4 18v-7h12v7h-3v-4H7v4z" fill="#3aa0d8" />
      </>
    ),
  },
  {
    name: 'Store',
    icon: (
      <>
        <path d="M7 6V3c0-3 7-3 7 0v3" stroke="#fff" strokeWidth="1.200" />
        <path d="M1 5h18v14H1z" fill="#fff" />
        <path d="M5 8h4v4H5z" fill="#e8502a" />
        <path d="M10 8h4v4h-4z" fill="#7ab82a" />
        <path d="M5 13h4v4H5z" fill="#2a9ad8" />
        <path d="M10 13h4v4h-4z" fill="#f0b82a" />
      </>
    ),
  },
  {
    name: 'Paint',
    icon: (
      <>
        <path d="M2 15C-2 8 8 1 15 5s3 13-3 14-2-5-5-4-4 2-5 0z" fill="#b8dcf0" stroke="#7aa8c8" strokeWidth=".6" />
        <circle cx="5" cy="11" r="1.700" fill="#e04a3a" />
        <circle cx="7" cy="7" r="1.700" fill="#4ab03a" />
        <circle cx="12" cy="6" r="1.700" fill="#f0c02a" />
        <path d="M17 2l-6 17" stroke="#c88a4a" strokeWidth="1.800" />
        <path d="M16 0l3 1-2 5-2-1z" fill="#b06a2a" />
      </>
    ),
  },
  {
    name: 'Command Prompt',
    icon: (
      <>
        <path d="M1 2h18v15H1z" fill="#000" stroke="#999" />
        <path d="M1 2h18v2H1z" fill="#ccc" />
        <path d="M6 6H4v3h2M8 6v3M10 6l2 3M13 9h3" stroke="#ddd" />
      </>
    ),
  },
  {
    name: 'WhatsApp',
    icon: (
      <>
        <path d="M0 0h20v20H0z" fill="#9c8850" />
        <circle cx="10" cy="10" r="6" fill="#2fb84a" />
        <FaWhatsapp x={3.500} y={3.500} size={13} color="#fff" />
      </>
    ),
  },
  {
    name: 'Control Panel',
    icon: (
      <>
        <path d="M1 4h18v12H1z" fill="#8cccf0" stroke="#3a90c8" />
        <circle cx="7" cy="9" r="3" fill="#2a70b8" />
        <path d="M12 7h5M12 9h5M12 11h5M4 14h11" stroke="#1c60a8" />
      </>
    ),
  },
  {
    name: 'Mail',
    icon: (
      <>
        <path d="M0 8l10-7 10 7v10H0z" fill="#fff" />
        <path d="M2 8l16 0-6 3 1 4z" fill="#04151b" />
      </>
    ),
  },
  {
    name: 'Wordweb',
    icon: (
      <>
        <path d="M3 1l13-1 1 17-4 2-10-3z" fill="#d8a878" />
        <path d="M16 0l1 17-2 1V1z" fill="#8a5a3a" />
        <path d="M5 6l1.500 7L9 7l2 6 2-7" stroke="#1c4f78" strokeWidth="1.800" />
      </>
    ),
  },
  {
    name: 'Remote Desktop',
    icon: (
      <>
        <path d="M5 1l13 4v9L5 10z" fill="#4ab0f0" stroke="#a8d8f4" strokeWidth=".6" />
        <path d="M1 15l9-2 9 4-8 2z" fill="#c8d4dc" />
      </>
    ),
  },
  { name: 'Alpari', caption: 'alpari', icon: alpari },
  { name: 'Alpari 2', caption: 'alpari', icon: alpari },
  {
    name: 'Chrome',
    open: true,
    icon: (
      <>
        <circle cx="10" cy="10" r="9" fill="#e8c02a" />
        <path d="M2.200 5.500A9 9 0 0118 6h-8l-4 6z" fill="#d8402a" />
        <path d="M2.200 5.500A9 9 0 009 19l4-7H6z" fill="#3a9a4a" />
        <circle cx="10" cy="10" r="4.300" fill="#fff" />
        <circle cx="10" cy="10" r="3.400" fill="#3a7ae0" />
      </>
    ),
  },
  {
    name: 'MetaTrader',
    open: true,
    active: true,
    icon: (
      <>
        <path d="M0 0h20v20H0z" fill="#fff" />
        <circle cx="10" cy="10" r="8" stroke="#2a2a4a" strokeWidth="1.600" />
        <path d="M4 5c3-3 10-3 12 2-2-1-4 0-3 2 0 2-3 0-3 2 0 3 4 3 6 1-2 5-9 5-11 0-1-2-2-5-1-7z" fill="#2a2a4a" />
      </>
    ),
  },
  {
    name: 'XM',
    icon: (
      <>
        <circle cx="10" cy="10" r="9.500" fill="#d8582a" />
        <path d="M4 3l12 14M16 3L4 17" stroke="#fbe8d8" strokeWidth="2" />
        <path d="M10 1a9 9 0 018 5l-5 3z" fill="#e8a050" />
      </>
    ),
  },
  {
    name: 'LiteFinance',
    icon: (
      <>
        <rect width="20" height="20" rx="1" fill="#e4eef0" />
        <path d="M3 10l7-7 3 3M8 12V8l3 3 6-7" stroke="#2a9a5a" strokeWidth="2.200" />
        <path d="M5 12l5 5 6-6" stroke="#e0b83a" strokeWidth="2.200" />
      </>
    ),
  },
  { name: 'Alpari 3', open: true, caption: 'alpari', icon: alpari },
  {
    name: 'Zoom trader',
    icon: (
      <>
        <path d="M0 0h20v20H0z" fill="#fff" />
        <path d="M3 3h14v4l-7 6h7v4H3v-4l7-6H3z" fill="#1464b0" />
      </>
    ),
  },
  {
    name: 'Telegram unread',
    open: true,
    icon: (
      <>
        <circle cx="10" cy="10" r="9.500" fill="#2496d0" />
        <FaTelegramPlane x={4} y={4} size={11} color="#fff" />
        <rect x="8" y="12" width="12" height="8" rx="1" fill="#8a9298" />
        <text x="9" y="19" fontSize="7" fill="#fff">..13</text>
      </>
    ),
  },
  {
    name: 'VLC',
    icon: (
      <>
        <path d="M9 1h2l5 15H4z" fill="#f08a1c" />
        <path d="M7.500 6h5l1 3h-7zM5.800 11h8.400l.8 3H5z" fill="#f4f0ea" />
        <path d="M3 15h14l2 4H1z" fill="#f08a1c" />
      </>
    ),
  },
  {
    name: 'Adobe Reader',
    open: true,
    icon: (
      <>
        <path d="M1 1h18v18H1z" fill="#c4161c" />
        <path d="M5 15c4-2 6-8 4.500-10S9 12 15 12c2-1-4-2-10 3" stroke="#fff" strokeWidth="1.200" />
      </>
    ),
  },
  {
    name: 'Calculator',
    open: true,
    icon: (
      <>
        <path d="M3 1h14v18H3z" fill="#fff" />
        <path d="M5 3h10v2H5z" fill="#04151b" />
        <path d="M5 9h10M5 12h10M5 15h10" stroke="#04151b" strokeWidth="1.500" strokeDasharray="2 2" />
      </>
    ),
  },
];

function Taskbar() {
  return (
    <footer className="flex h-10 items-center bg-linear-to-r from-[#1d1428] via-[#04151b] via-10% to-[#04151b] text-white">
      <button aria-label="Start" className="flex w-12 justify-center">
        <svg viewBox="0 0 16 16" className="h-4 w-4">
          <path d="M0 2l6.500-1v6.500H0zM7.500 1L16 0v7.500H7.500zM0 8.500h6.500V15L0 14zM7.500 8.500H16V16l-8.500-1z" fill="#fff" />
        </svg>
      </button>
      <button aria-label="Cortana" className="flex w-12 justify-center">
        <span className="h-4 w-4 rounded-full border-2 border-white" />
      </button>
      <button aria-label="Task view" className="flex w-12 justify-center">
        <Icon className="h-4 w-4">
          <path d="M1 0v4h12V0M1 20v-4h12v4M1 7h12v6H1zM18 0v4M18 8v12" stroke="#ddd" strokeWidth="1.500" />
        </Icon>
      </button>
      <div className="flex pl-[3px]">
        {TASKS.map((t, i) => (
          <button
            key={t.name}
            aria-label={t.name}
            className={`flex h-10 shrink-0 flex-col items-center justify-between ${i < 4 ? 'w-[45px]' : 'w-11'} ${
              t.active ? 'bg-[#3a464b]' : ''
            }`}
          >
            <span className="h-0.5" />
            <span className="relative">
              <Icon className="h-6 w-6">{t.icon}</Icon>
              {t.caption && (
                <span className="absolute -bottom-0.5 left-0 text-[9px] leading-3 text-[#2c2a20]">{t.caption}</span>
              )}
            </span>
            <span className={`h-0.5 ${t.open ? 'bg-[#b5a679]' : ''} ${t.active ? 'w-11' : 'w-9'}`} />
          </button>
        ))}
      </div>
      <div className="ml-auto flex items-center">
        <Icon className="h-7 w-7">
          <circle cx="10" cy="10" r="8" fill="#2a9ad8" stroke="#fff" strokeWidth="1.200" />
          <path d="M7.500 8c0-4 5.500-3.500 5 0-.3 2-2.500 2-2.500 4M10 13.500v1.500" stroke="#fff" strokeWidth="1.800" />
          <circle cx="15" cy="15" r="4" fill="#f0b02a" />
          <path d="M15 13v4" stroke="#fff" strokeWidth="1.300" />
        </Icon>
        <Icon className="ml-[17px] h-5 w-5">
          <circle cx="13" cy="6" r="2.500" stroke="#fff" />
          <circle cx="7" cy="10" r="2.500" stroke="#fff" />
          <path d="M3 17c0-6 8-6 8 0M10 10c2-2 7-1 7 3" stroke="#fff" />
        </Icon>
        <ChevronUp className="ml-[17px] h-[18px] w-[18px]" strokeWidth={1.500} />
        <Icon className="ml-2 h-4 w-4">
          <path d="M1 5h16v10H1zM18 8h2v4h-2" stroke="#fff" strokeWidth="1.300" />
          <path d="M3 7h9v6H3z" fill="#fff" />
        </Icon>
        <Icon className="ml-[7px] h-[17px] w-[17px]">
          <path d="M6 3h13v11H6zM12 14v4M7 18h10M1 1h5v5H1zM3 6v12h3" stroke="#fff" strokeWidth="1.300" />
        </Icon>
        <Icon className="ml-[7px] h-4 w-4">
          <path d="M1 7h3l5-5v16l-5-5H1zM12 7q2 3 0 6M15 4q4 6 0 12M18 2q4 8 0 16" stroke="#fff" strokeWidth="1.300" />
        </Icon>
        <div className="ml-2.5 w-[52px] text-center text-[11px] leading-[18px] whitespace-nowrap">
          <div>07:36</div>
          <div>18-Jul-19</div>
        </div>
        <button aria-label="Notifications" className="relative mx-4 h-7 w-7">
          <svg viewBox="0 0 28 28" className="h-7 w-7">
            <path d="M2 5h16v14h-9l-3 3v-3H2z" fill="#fff" />
            <path d="M5 9h10M5 12h10M5 15h7" stroke="#04151b" strokeWidth="1.200" />
            <circle cx="18" cy="19" r="7.500" fill="#30363c" stroke="#999" />
          </svg>
          <span className="absolute right-2 bottom-1 text-[11px] leading-3">1</span>
        </button>
      </div>
    </footer>
  );
}

export default function App() {
  return (
    <div className="min-h-screen bg-white">
      <main className="w-full max-w-[1600px] font-['Noto_Sans',sans-serif]">
        <TitleBar />
        <MenuBar />
        <Toolbar />
        <ChartWindow />
        <ChartTabs />
        <StatusBar />
        <Taskbar />
      </main>
    </div>
  );
}
